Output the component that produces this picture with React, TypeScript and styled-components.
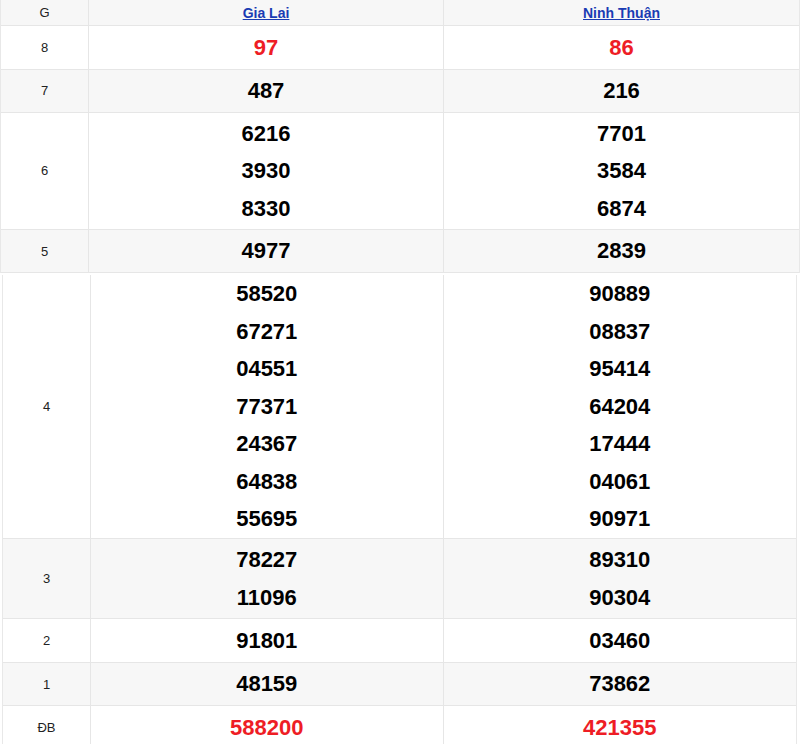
import React from "react";
import styled, { createGlobalStyle } from "styled-components";

const GlobalStyle = createGlobalStyle`
  body {
    margin: 0;
    background: #fff;
    font-family: "Liberation Sans", Arial, sans-serif;
  }
`;

type Prize = {
  label: string;
  left: string[];
  right: string[];
  red?: boolean;
};

const topPrizes: Prize[] = [
  { label: "8", left: ["97"], right: ["86"], red: true },
  { label: "7", left: ["487"], right: ["216"] },
  { label: "6", left: ["6216", "3930", "8330"], right: ["7701", "3584", "6874"] },
  { label: "5", left: ["4977"], right: ["2839"] },
];

const bottomPrizes: Prize[] = [
  {
    label: "4",
    left: ["58520", "67271", "04551", "77371", "24367", "64838", "55695"],
    right: ["90889", "08837", "95414", "64204", "17444", "04061", "90971"],
  },
  { label: "3", left: ["78227", "11096"], right: ["89310", "90304"] },
  { label: "2", left: ["91801"], right: ["03460"] },
  { label: "1", left: ["48159"], right: ["73862"] },
  { label: "ĐB", left: ["588200"], right: ["421355"], red: true },
];

const Page = styled.div`
  width: 800px;
  height: 744px;
  overflow: hidden;
`;

const Board = styled.div<{ $inset?: boolean }>`
  display: flex;
  flex-direction: column;
  margin: ${(p) => (p.$inset ? "2px 3px 0 2px" : "0")};
  border-left: 1px solid #e8e8e8;
  border-right: 1px solid #e8e8e8;
`;

const Row = styled.div<{ $shade?: boolean }>`
  display: grid;
  grid-template-columns: 88px 1fr 1fr;
  background: ${(p) => (p.$shade ? "#f7f7f7" : "#fff")};
  border-bottom: 1px solid #e6e6e6;
`;

const LabelCell = styled.div`
  display: flex;
  align-items: center;
  justify-content: center;
  font-size: 13px;
  color: #222;
  border-right: 1px solid #e6e6e6;
`;

const HeadCell = styled.div<{ $last?: boolean }>`
  height: 25px;
  display: flex;
  align-items: center;
  justify-content: center;
  border-right: ${(p) => (p.$last ? "none" : "1px solid #e6e6e6")};
  font-size: 13px;
  color: #222;
`;

const Province = styled.a`
  color: #1a3bb3;
  font-size: 14px;
  font-weight: bold;
  text-decoration: underline;
`;

// taller cells get a little less padding, like the original table
const PrizeCell = styled.div<{ $last?: boolean; $lines: number }>`
  display: flex;
  flex-direction: column;
  align-items: center;
  padding: ${(p) => Math.max(0, 2.5 - (p.$lines - 1) * 0.4)}px 0;
  border-right: ${(p) => (p.$last ? "none" : "1px solid #e6e6e6")};
`;

const Num = styled.span<{ $red?: boolean }>`
  font-size: 22px;
  font-weight: bold;
  line-height: 37.5px;
  color: ${(p) => (p.$red ? "#ee1d25" : "#000")};
`;

const PrizeRow = ({ prize, shade }: { prize: Prize; shade: boolean }) => (
  <Row $shade={shade}>
    <LabelCell>{prize.label}</LabelCell>
    <PrizeCell $lines={prize.left.length}>
      {prize.left.map((n, i) => (
        <Num key={i} $red={prize.red}>{n}</Num>
      ))}
    </PrizeCell>
    <PrizeCell $last $lines={prize.right.length}>
      {prize.right.map((n, i) => (
        <Num key={i} $red={prize.red}>{n}</Num>
      ))}
    </PrizeCell>
  </Row>
);

export default function App() {
  return (
    <Page>
      <GlobalStyle />
      <Board>
        <Row $shade>
          <HeadCell>G</HeadCell>
          <HeadCell>
            <Province href="#">Gia Lai</Province>
          </HeadCell>
          <HeadCell $last>
            <Province href="#">Ninh Thuận</Province>
          </HeadCell>
        </Row>
        {topPrizes.map((p, i) => (
          <PrizeRow key={p.label} prize={p} shade={i % 2 === 1} />
        ))}
      </Board>
      <Board $inset>
        {bottomPrizes.map((p, i) => (
          <PrizeRow key={p.label} prize={p} shade={i % 2 === 1} />
        ))}
      </Board>
    </Page>
  );
}
